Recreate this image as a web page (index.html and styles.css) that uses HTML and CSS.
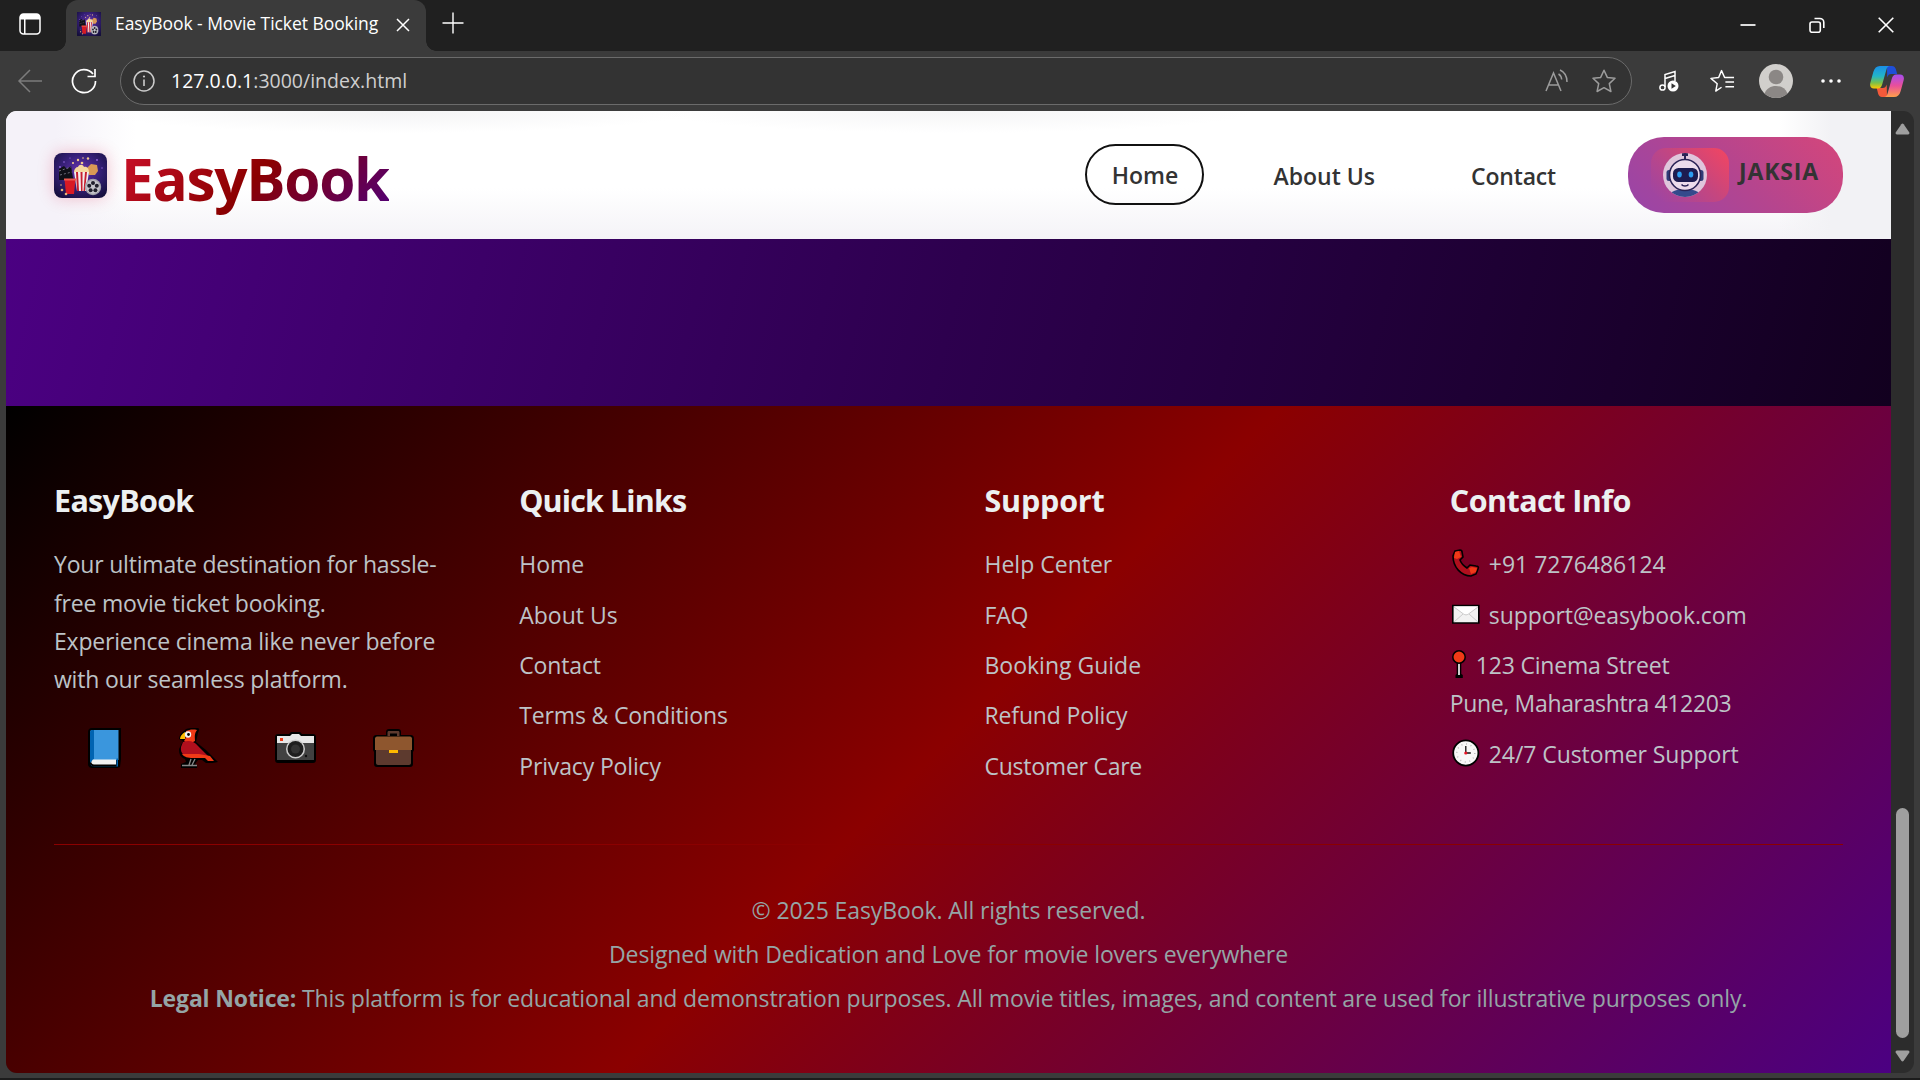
FILE: index.html
```html
<!DOCTYPE html>
<html lang="en">
<head>
<meta charset="utf-8">
<title>EasyBook - Movie Ticket Booking</title>
<link rel="stylesheet" href="styles.css">
</head>
<body>
<svg class="defs" aria-hidden="true">
  <defs>
    <radialGradient id="night" cx=".5" cy=".4" r=".7"><stop offset="0" stop-color="#6a35b0"/><stop offset=".5" stop-color="#38207a"/><stop offset="1" stop-color="#150f3c"/></radialGradient>
    <linearGradient id="cpA" x1="0" y1="0" x2="0" y2="1"><stop offset="0" stop-color="#1a8fe8"/><stop offset=".45" stop-color="#22b5c8"/><stop offset=".75" stop-color="#7bc04a"/><stop offset="1" stop-color="#ffc800"/></linearGradient>
    <linearGradient id="cpB" x1="0" y1="0" x2="0" y2="1"><stop offset="0" stop-color="#a64df0"/><stop offset=".5" stop-color="#e94f9a"/><stop offset="1" stop-color="#ffa04a"/></linearGradient>
  </defs>
  <symbol id="snacks" viewBox="0 0 53 45" preserveAspectRatio="none">
    <rect width="53" height="45" fill="url(#night)"/>
    <g fill="#9a6be0"><circle cx="10" cy="9" r=".8"/><circle cx="43" cy="7" r=".9"/><circle cx="16" cy="5" r=".6"/><circle cx="48" cy="15" r=".7"/><circle cx="6" cy="14" r=".9"/></g>
    <g fill="#f2c88e"><circle cx="19" cy="10" r="1.1"/><circle cx="24" cy="7" r="1.2"/><circle cx="28" cy="10" r="1.3"/><circle cx="34" cy="5.500" r="1.200"/><circle cx="29" cy="5" r=".8"/></g>
    <path d="M5 16l5-3 3 3 4-3 2 12 2 2H5z" fill="#101018"/>
    <path d="M5 18l12-4M6 22l12-3" stroke="#6f6f7c" stroke-width="1" stroke-dasharray="2 2"/>
    <path d="M33 15l4-4 6 1 1 6-3 4h-6z" fill="#d99a55"/>
    <path d="M20 19c0-3 2-5 4-5 1-3 5-3 6 0 3-1 5 2 5 5z" fill="#f6d9a0"/>
    <path d="M20 19h15l-3 19h-9z" fill="#f3eeee"/>
    <path d="M22 19h2l1 19h-2zM26.500 19h2v19h-1.500zM31 19h2l-2 19h-1.500z" fill="#c61f2f"/>
    <path d="M10.500 26h11l-1.500 15h-8z" fill="#d81a24"/><path d="M10 25.500h12v2H10z" fill="#ef5950"/>
    <circle cx="39" cy="34" r="8.200" fill="#a3a3ab"/><circle cx="39" cy="34" r="6.800" fill="#c6c6cc"/>
    <g fill="#20202c"><circle cx="39" cy="30" r="2"/><circle cx="42.800" cy="32.800" r="2"/><circle cx="41.400" cy="37.300" r="2"/><circle cx="36.600" cy="37.300" r="2"/><circle cx="35.200" cy="32.800" r="2"/></g>
    <g fill="#e6b47a"><circle cx="8" cy="37" r="1.300"/><circle cx="12" cy="41" r="1.300"/><circle cx="7" cy="32" r=".8"/></g>
  </symbol>
</svg>

<div class="tabbar">
  <svg class="workspaces" viewBox="0 0 22 22"><rect x="1" y="1" width="20" height="20" rx="3.500" fill="none" stroke="#fff" stroke-width="1.500"/><path d="M1 4.500A3.500 3.500 0 0 1 4.500 1h13A3.500 3.500 0 0 1 21 4.500V6.500H1zM5 6h1.500v15H5z" fill="#fff"/></svg>
  <div class="tab">
    <svg class="favicon"><use href="#snacks"/></svg>
    <span class="tab-title">EasyBook - Movie Ticket Booking</span>
    <svg class="tab-close" viewBox="0 0 14 14"><path d="M1 1l12 12M13 1L1 13" stroke="#fff" stroke-width="1.500"/></svg>
  </div>
  <svg class="new-tab" viewBox="0 0 22 22"><path d="M11 .5v21M.5 11h21" stroke="#fff" stroke-width="1.400"/></svg>
  <div class="window-controls">
    <svg viewBox="0 0 16 16"><path d="M.5 8h15" stroke="#fff" stroke-width="1.700"/></svg>
    <svg viewBox="0 0 16 16" fill="none" stroke="#fff" stroke-width="1.600"><rect x="1" y="5" width="10.300" height="10.300" rx="2"/><path d="M5.500 1.500h5.300a4 4 0 0 1 4 4V11"/></svg>
    <svg viewBox="0 0 16 16"><path d="M.7.7l14.600 14.600M15.300.7L.7 15.300" stroke="#fff" stroke-width="1.600"/></svg>
  </div>
</div>

<div class="toolbar">
  <svg class="back" viewBox="0 0 26 24" fill="none" stroke="#7c7c7c" stroke-width="1.500"><path d="M25 12H2M13 1L2 12l11 11"/></svg>
  <svg class="reload" viewBox="0 0 26 26" fill="none" stroke="#fff" stroke-width="1.700"><path d="M24.500 13A11.500 11.500 0 1 1 22 6M24 1v7.500h-7.500"/></svg>
  <div class="address">
    <svg class="info" viewBox="0 0 22 22"><circle cx="11" cy="11" r="10" fill="none" stroke="#ccc" stroke-width="1.500"/><path d="M11 9.500V16" stroke="#ccc" stroke-width="1.600"/><circle cx="11" cy="6.500" r="1.100" fill="#ccc"/></svg>
    <span class="url"><b>127.0.0.1</b>:3000/index.html</span>
    <svg class="read" viewBox="0 0 24 24" fill="none" stroke="#9c9c9c" stroke-width="1.500"><path d="M1 22L8.500 4 16 22M3.500 16h10M13.500 5c2 1.200 3 3 3.200 5.500M15 1c4.500 2 7 6.500 7 12"/></svg>
    <svg class="star" viewBox="0 0 24 24" fill="none" stroke="#9c9c9c" stroke-width="1.500" stroke-linejoin="round"><path d="M12 1.200l3.300 7.200 7.700.9-5.700 5.300 1.600 7.900L12 18.700l-6.900 3.800 1.600-7.900L1 9.300l7.700-.9z"/></svg>
  </div>
  <div class="actions">
    <svg class="music" viewBox="0 0 20 22" fill="none" stroke="#fff" stroke-width="1.500"><path d="M6 17V4.500l10-3V11M6 8.500l10-3"/><circle cx="3.500" cy="17.500" r="2.600"/><circle cx="14" cy="16" r="5.500" fill="#fff" stroke="none"/><path d="M12.500 13.300v5.400l4.300-2.700z" fill="#333" stroke="none"/></svg>
    <svg class="favs" viewBox="0 0 26 24" fill="none" stroke="#fff" stroke-width="1.500" stroke-linejoin="round"><path d="M12 18.500L6 22.500l1.500-7.700L1 9.300l8-.9L12 1.200l3.200 7.200H25M16 13h9M16 18h9"/></svg>
    <svg class="avatar" viewBox="0 0 34 34"><circle cx="17" cy="17" r="17" fill="#d1cfcc"/><circle cx="17" cy="13" r="7.300" fill="#8b8785"/><path d="M5.500 29.500c2-5 6-7.500 11.500-7.500s9.500 2.500 11.500 7.500A17 17 0 0 1 17 34a17 17 0 0 1-11.500-4.500z" fill="#8b8785"/></svg>
    <svg class="more" viewBox="0 0 20 4" fill="#fff"><circle cx="2" cy="2" r="1.800"/><circle cx="10" cy="2" r="1.800"/><circle cx="18" cy="2" r="1.800"/></svg>
    <svg class="copilot" viewBox="0 0 34 31"><path d="M17 0h5c2 0 3 1 3.800 3l1.400 5h-6c-2 0-3.200 1-4 3.500z" fill="#1f4fd8"/><path d="M17 31h-5c-2 0-3-1-3.800-3l-1.500-6h6c2 0 3.200-1 4-3.500z" fill="#f4593a"/><path d="M10 0h10c-2 0-3 1.500-3.700 4l-4 14c-.9 3-2 4.500-4.500 4.500H4c-3 0-4.500-2-3.700-5.500l3-11C4.500 2 6.500 0 10 0z" fill="url(#cpA)"/><path d="M24 31H14c2 0 3-1.500 3.700-4l4-14c.9-3 2-4.500 4.500-4.500H30c3 0 4.500 2 3.700 5.500l-3 11c-1.200 4-3.200 6-6.700 6z" fill="url(#cpB)"/></svg>
  </div>
</div>

<div class="viewport">
  <div class="page">
    <header class="site-header">
      <a class="brand"><svg class="brand-icon"><use href="#snacks"/></svg><span class="brand-name">EasyBook</span></a>
      <nav class="nav">
        <a class="nav-link active">Home</a>
        <a class="nav-link about">About Us</a>
        <a class="nav-link contact">Contact</a>
        <a class="assistant">
          <span class="bot">
            <svg viewBox="0 0 44 44"><defs><clipPath id="disc"><circle cx="22" cy="22" r="22"/></clipPath></defs>
              <g clip-path="url(#disc)"><rect width="44" height="44" fill="#dfc6dc"/>
              <path d="M9 44v-5c3-2 8-3 13-3s10 1 13 3v5z" fill="#344a8c"/>
              <path d="M19 0h6v3h-2v4h-2V3h-2z" fill="#2a2356"/>
              <rect x="3.500" y="17" width="6" height="11" rx="2.500" fill="#2f3d78"/><rect x="34.500" y="17" width="6" height="11" rx="2.500" fill="#2f3d78"/>
              <circle cx="22" cy="22" r="15.500" fill="#ecdcec" stroke="#2a2356" stroke-width="1.600"/>
              <rect x="10" y="15" width="25" height="14" rx="5.500" fill="#1d1c50"/>
              <ellipse cx="16.500" cy="21.500" rx="2.300" ry="3" fill="#2b9cf0"/><ellipse cx="28" cy="21.500" rx="2.300" ry="3" fill="#2b9cf0"/>
              <path d="M18.500 31.500c1.500 2 5.500 2 7 0" fill="none" stroke="#2a2356" stroke-width="1.400"/></g></svg>
          </span>
          <span class="assistant-name">JAKSIA</span>
        </a>
      </nav>
    </header>
    <section class="band"></section>
    <footer class="footer">
      <div class="columns">
        <div class="column">
          <h3 class="name">EasyBook</h3>
          <p>Your ultimate destination for hassle-<br>free movie ticket booking.<br>Experience cinema like never before<br>with our seamless platform.</p>
          <div class="social">
            <svg class="book" viewBox="0 0 33 40"><path d="M4 0h29v31l-1 8-3 1H5c-3 0-5-1-5-4V4c0-2 1-4 4-4z" fill="#000"/><path d="M4 2h26.500v30H5l-3 2V5c0-2 .500-3 2-3z" fill="#3a96dd"/><path d="M4 2h2v29l-4 4V5c0-2 .500-3 2-3z" fill="#0063b1"/><path d="M5 31.500h23v5H6c-3 0-3.500-3-1-5z" fill="#f2f2f2"/><path d="M2.500 36c1 2 2 2.300 4 2.300h22V30.500h1.500v8H6c-2 0-3.500-.8-3.500-2.500z" fill="#0063b1"/></svg>
            <svg class="bird" viewBox="0 0 40 40"><path d="M7 2c2-2 6-2 13-2 2 1 1 2 0 5l-2 9 10 8 12 12c-3 1-8 1-12 1l-4-3h-4l-3 4c3 1 2 2 2 4H3v-4l5-2-1-3C2 29 1 26 1 21l4-8-4-2c0-3 2-6 6-9z" fill="#000"/><path d="M8 3c3-1 6-2 11-1-3 4-2 7-2 11l-6 3-5-3c2-2 2-6 2-10z" fill="#f03a17"/><path d="M7 4v7H2c0-3 2-5 5-7z" fill="#ffb900"/><circle cx="10" cy="6.500" r="3.200" fill="#f2f2f2"/><circle cx="10.500" cy="6.500" r="1.400" fill="#000"/><path d="M5 14c6-2 11-1 15 4l11 11H14C7 29 2 26 3 19z" fill="#b00f1d"/><path d="M4 26h17l11 2 4 5h-6l-3-3H15c-5 0-9-1-11-4z" fill="#f03a17"/><path d="M13 31l-2 6m6-6l-3 6M4 37.500h15" stroke="#868686" stroke-width="1.300"/></svg>
            <svg class="camera" viewBox="0 0 41 31"><path d="M3 2h11l2-2h9l2 2h11c2 0 3 1 3 3v22c0 3-1 4-3 4H3c-2 0-3-1-3-4V5c0-2 1-3 3-3z" fill="#000"/><path d="M2 4h13l2-2h7l2 2h13v7H2z" fill="#e6e6e6"/><path d="M2 11h37v17H2z" fill="#414141"/><circle cx="20.500" cy="17" r="9.500" fill="#ccc"/><circle cx="20.500" cy="17" r="8" fill="#1e1e1e"/><circle cx="20.500" cy="17" r="4.500" fill="#333"/><rect x="5" y="6" width="3" height="3" fill="#f03a17"/><circle cx="31" cy="24" r="1.200" fill="#111"/></svg>
            <svg class="case" viewBox="0 0 41 38"><path d="M13 6V3c0-2 1-3 3-3h9c2 0 3 1 3 3v3h9c3 0 4 1 4 4v11l-1 2v12c0 2-1 3-3 3H4c-2 0-3-1-3-3V23l-1-2V10c0-3 1-4 4-4z" fill="#000"/><path d="M14.500 7V3.500c0-1 .500-1.500 1.500-1.500h9c1 0 1.500.500 1.500 1.500V7h-2.500V4.500h-7V7z" fill="#5d3a2e"/><path d="M3 21h35v13c0 1-1 2-2 2H5c-1 0-2-1-2-2z" fill="#5d3a2e"/><path d="M4 7.500h33c1 0 2 1 2 2V21H2V9.500c0-1 1-2 2-2z" fill="#8e562e"/><path d="M16 21h9v3h-9z" fill="#ffb900"/></svg>
          </div>
        </div>
        <div class="column">
          <h3 class="links">Quick Links</h3>
          <ul><li class="open">Home</li><li class="open">About Us</li><li>Contact</li><li>Terms &amp; Conditions</li><li>Privacy Policy</li></ul>
        </div>
        <div class="column">
          <h3 class="support">Support</h3>
          <ul><li class="open">Help Center</li><li>FAQ</li><li class="open">Booking Guide</li><li>Refund Policy</li><li class="care">Customer Care</li></ul>
        </div>
        <div class="column">
          <h3>Contact Info</h3>
          <ul>
            <li class="open"><svg class="glyph" viewBox="0 0 28 28"><path d="M3 2l5-1c1 0 2 1 2 2l1 5-3 3c1 3 4 6 7 8l3-3 6 1c2 0 3 1 2 3l-2 5-5 2C9 27 1 18 1 7z" fill="#b00f1d" stroke="#000" stroke-width="1.600"/><path d="M3 3l4-1 2 6-4 2-3-1zM17 19l3-1 5 1-1 4-5 2z" fill="#f03a17"/></svg>+91 7276486124</li>
            <li class="mail"><svg class="glyph" viewBox="0 0 28 28"><path d="M.8 5.500h26v17.500H.8z" fill="#f2f2f2" stroke="#000" stroke-width="1.600"/><path d="M2 6.500h24l-9.500 7.500c-2 1.200-3 1.200-5 0z" fill="#fff"/><path d="M2 7l9.500 7c2 1.200 3 1.200 5 0L26 7M2 22l9-8M26 22l-9-8" fill="none" stroke="#ccc" stroke-width="1"/></svg>support@easybook.com</li>
            <li class="street"><svg class="glyph pin" viewBox="0 0 14 28"><path d="M4.700 12h4.600v12l1.500 1v3H3.500v-3l1.200-1z" fill="#000"/><path d="M7 12v13" stroke="#ccc" stroke-width="2"/><circle cx="7" cy="7" r="6.200" fill="#f03a17" stroke="#000" stroke-width="1.500"/></svg>123 Cinema Street<br><span class="city">Pune, Maharashtra 412203</span></li>
            <li class="hours"><svg class="glyph" viewBox="0 0 28 28"><circle cx="13.800" cy="14" r="12.600" fill="#f7f7f7" stroke="#000" stroke-width="1.800"/><circle cx="13.800" cy="14" r="9" fill="none" stroke="#bbb" stroke-width="1.500" stroke-dasharray="1 3.710"/><path d="M13.800 7v7h5" fill="none" stroke="#111" stroke-width="1.300"/><circle cx="13.800" cy="14" r="1.600" fill="#e81224"/></svg>24/7 Customer Support</li>
          </ul>
        </div>
      </div>
      <div class="legal">
        <p class="rights">© 2025 EasyBook. All rights reserved.</p>
        <p class="credit">Designed with Dedication and Love for movie lovers everywhere</p>
        <p><strong>Legal Notice:</strong> This platform is for educational and demonstration purposes. All movie titles, images, and content are used for illustrative purposes only.</p>
      </div>
    </footer>
  </div>
  <div class="scrollbar">
    <svg class="arrow" viewBox="0 0 15 12"><path d="M6.300 1.200a1.500 1.500 0 0 1 2.400 0l5.500 8a1.500 1.500 0 0 1-1.200 2.300H2A1.500 1.500 0 0 1 .8 9.200z" fill="#9f9f9f"/></svg>
    <div class="thumb"></div>
    <svg class="arrow" viewBox="0 0 15 12"><path d="M6.300 10.800a1.500 1.500 0 0 0 2.400 0l5.500-8A1.500 1.500 0 0 0 13 .5H2A1.500 1.500 0 0 0 .8 2.800z" fill="#9f9f9f"/></svg>
  </div>
</div>
<div class="screen-edge"></div>
</body>
</html>
```
FILE: styles.css
```css
* { box-sizing: border-box; margin: 0; padding: 0; }
body {
  width: 1920px; height: 1080px; overflow: hidden;
  display: flex; flex-direction: column;
  background: #3b3b3b;
  font-family: "Open Sans", sans-serif; font-size: 23px; line-height: 38.4px; letter-spacing: -0.15px;
}
svg { display: block; flex: none; }
.defs { position: absolute; width: 0; height: 0; }

/* Window title bar */
.tabbar { flex: none; height: 51px; display: flex; align-items: center; background: #202020; }
.workspaces { width: 22px; height: 22px; margin: 0 25px 3px 19px; }
.tab {
  position: relative; width: 360px; height: 51px; padding: 0 16px 3px 11px;
  display: flex; align-items: center;
  background: #3b3b3b; border-radius: 12px 12px 0 0;
}
.tab::before, .tab::after { content: ""; position: absolute; bottom: 0; width: 10px; height: 10px; }
.tab::before { left: -10px; background: radial-gradient(circle at 0 0, #202020 9.500px, #3b3b3b 10px); }
.tab::after { right: -10px; background: radial-gradient(circle at 100% 0, #202020 9.500px, #3b3b3b 10px); }
.favicon { width: 24px; height: 24px; margin-right: 14px; }
.tab-title { flex: 1; margin-top: -1px; color: #fff; font-size: 17.500px; letter-spacing: -0.06px; white-space: nowrap; }
.tab-close { width: 14px; height: 14px; margin-top: 2px; }
.new-tab { width: 22px; height: 22px; margin: 0 0 5px 16px; }
.window-controls { margin-left: auto; padding: 0 26px 1px 0; display: flex; gap: 53px; }
.window-controls svg { width: 16px; height: 16px; }

/* Navigation toolbar */
.toolbar { flex: none; height: 60px; display: flex; align-items: center; }
.back { width: 26px; height: 24px; margin: 0 28px 0 17px; }
.reload { width: 26px; height: 26px; margin-right: 23px; }
.address {
  width: 1512px; height: 48px; padding: 0 15px 0 12px;
  display: flex; align-items: center;
  border: 1.500px solid #6b6b6b; border-radius: 24px; background: #333;
}
.info { width: 22px; height: 22px; margin-right: 16px; }
.url { flex: 1; margin-top: 1px; color: #cfcfcf; font-size: 19.500px; letter-spacing: 0; }
.url b { color: #fff; font-weight: 400; }
.read { width: 24px; height: 24px; margin-right: 23px; }
.star { width: 24px; height: 24px; }
.actions { display: flex; align-items: center; }
.music { width: 20px; height: 22px; margin-left: 27px; }
.favs { width: 25px; height: 24px; margin-left: 31px; }
.avatar { width: 34px; height: 34px; margin-left: 24px; }
.more { width: 20px; height: 4px; margin-left: 28px; }
.copilot { width: 34px; height: 31px; margin-left: 29px; }

/* Page area */
.viewport { flex: none; height: 962px; margin: 0 6px; display: flex; border-radius: 11px; overflow: hidden; background: #2c2c2c; }
.page { width: 1885px; display: flex; flex-direction: column; }
.site-header {
  height: 128px; padding: 0 48px; display: flex; align-items: center; justify-content: space-between;
  background:
    radial-gradient(ellipse 300px 22px at 390px 0, #f4f4f5, rgba(244, 244, 245, 0)),
    radial-gradient(ellipse 300px 22px at 950px 0, #f5f5f6, rgba(245, 245, 246, 0)),
    linear-gradient(90deg, #f5f2f9 50px, rgba(245, 242, 249, 0) 130px),
    linear-gradient(270deg, #f2f2f5 60px, rgba(242, 242, 245, 0) 112px),
    linear-gradient(#fff 60%, #f4f3f7);
}
.brand { display: flex; align-items: center; }
.brand-icon { width: 53px; height: 45px; margin: 0 14px 0 0; border-radius: 8px; box-shadow: 0 0 16px rgba(220, 20, 60, .25); }
.brand-name {
  font-size: 58.500px; line-height: 96px; font-weight: 700; letter-spacing: -1.300px;
  background: linear-gradient(135deg, #d2122f, #8b0000 50%, #4b0082);
  -webkit-background-clip: text; background-clip: text; color: transparent;
  margin-top: 5px;
}
.nav { display: flex; align-items: center; color: #333; font-weight: 600; letter-spacing: 0; }
.nav-link.active { width: 119px; height: 61px; margin-bottom: 1px; border: 2.500px solid #111; border-radius: 31px; line-height: 59px; text-align: center; }
.about { margin: 2px 0 0 69px; }
.contact { margin: 2px 0 0 96px; letter-spacing: -0.170px; }
.assistant {
  width: 215px; height: 76px; margin-left: 72px; padding: 0 0 0 23px; display: flex; align-items: center;
  border-radius: 36px; background: linear-gradient(45deg, #9845a8, #b4458f 50%, #d5467a);
}
.bot { width: 78px; height: 54px; padding-left: 12px; display: flex; align-items: center; border-radius: 15px; background: linear-gradient(45deg, #9a45a6, #c5467f 55%, #f44560); }
.bot svg { width: 44px; height: 44px; }
.assistant-name { margin: -7px 0 0 10px; font-weight: 700; letter-spacing: .85px; }
.band { height: 167px; background: linear-gradient(104deg, #4b0082, #2d004e 50%, #12001f); }

/* Footer */
.footer { height: 667px; padding: 73px 48px 0; color: #bdc3c7; background: linear-gradient(135deg, #000, #8b0000 50%, #4b0082); }
.columns { display: grid; grid-template-columns: repeat(4, 1fr); gap: 72px; height: 365px; }
.column { white-space: nowrap; }
h3 { margin-bottom: 23px; color: #ecf0f1; font-size: 30.500px; line-height: 43.200px; letter-spacing: -.55px; }
.name { letter-spacing: -.7px; }
.links { letter-spacing: -.9px; }
.support { letter-spacing: -.2px; }
.column p { letter-spacing: -.2px; }
ul { list-style: none; }
li { margin-bottom: 12px; }
.open { letter-spacing: 0; }
.care { letter-spacing: -.25px; }
.mail, .hours { letter-spacing: -.07px; }
.street { letter-spacing: -.2px; }
.city { letter-spacing: -.34px; }
.glyph { display: inline-block; width: 28px; height: 28px; margin: 0 9px 0 2px; vertical-align: -4px; }
.glyph.pin { width: 14px; margin-right: 10px; }
.social { display: flex; align-items: center; height: 40px; margin-top: 29px; padding-left: 34px; }
.book { width: 33px; height: 40px; }
.bird { width: 40px; height: 40px; margin-left: 57px; }
.camera { width: 41px; height: 31px; margin-left: 57px; }
.case { width: 41px; height: 38px; margin-left: 57px; }
.legal { border-top: 1px solid #8b0000; padding-top: 46px; text-align: center; color: #95a5a6; white-space: nowrap; }
.legal p { margin-bottom: 5.600px; }
.rights { letter-spacing: -.1px; }
.credit { letter-spacing: -.12px; }

/* Scrollbar */
.scrollbar { width: 23px; padding: 12px 4px 11px; display: flex; flex-direction: column; }
.arrow { width: 15px; height: 12px; }
.thumb { width: 13px; height: 230px; margin: auto 1px 12px; border-radius: 7px; background: #9f9f9f; }
.screen-edge { margin-top: auto; height: 2px; background: #1c1c1c; }
```
